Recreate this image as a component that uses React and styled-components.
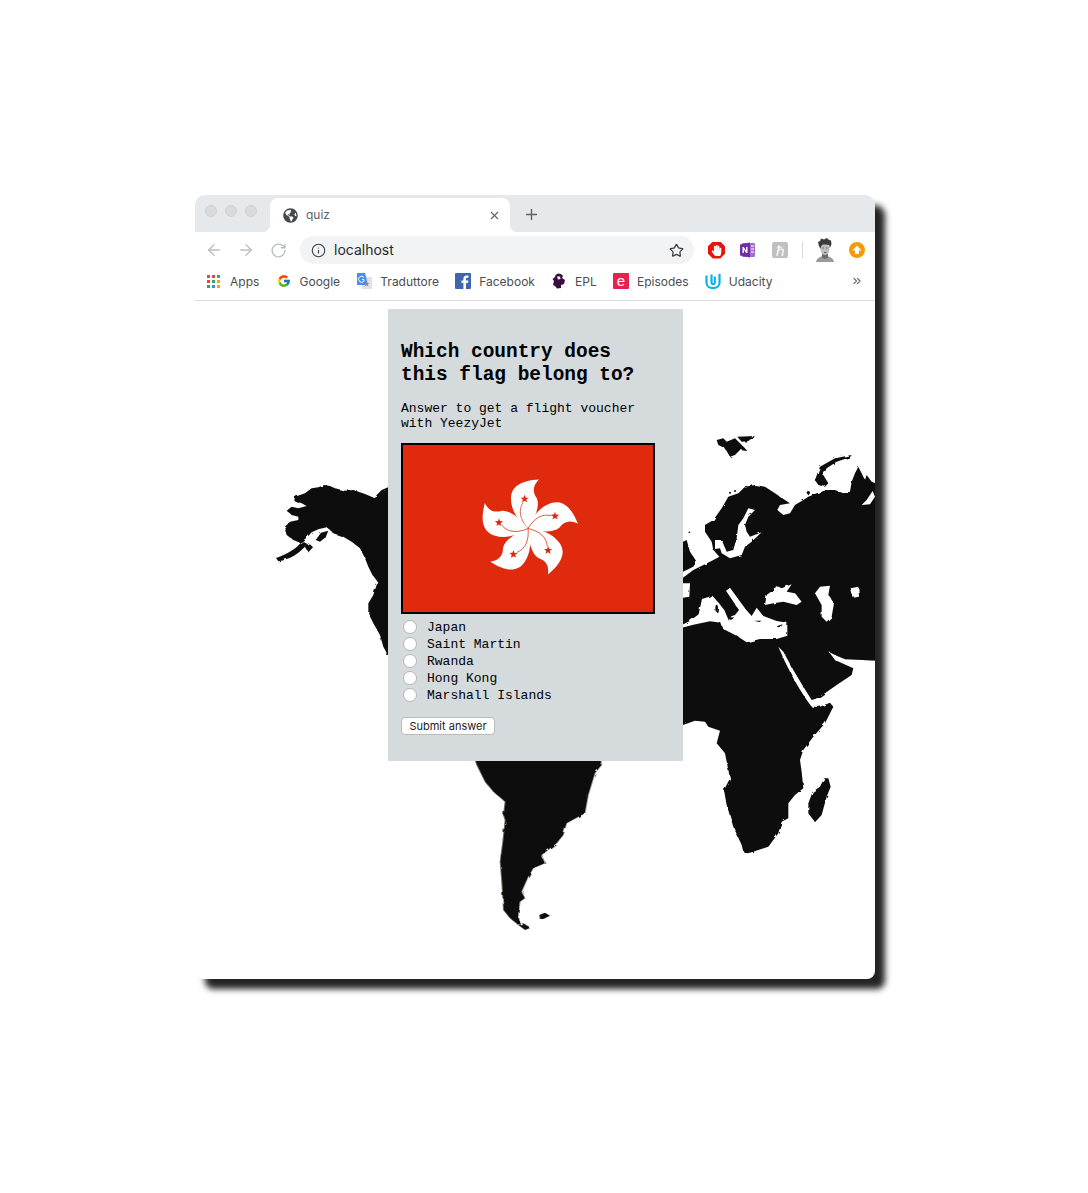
import React from 'react'
import styled, { createGlobalStyle } from 'styled-components'
import { ArrowLeft, ArrowRight, RotateCw, Info, Star, X, Plus, ChevronsRight } from 'lucide-react'
import { FaGlobeAmericas, FaHandPaper } from 'react-icons/fa'
import { FcGoogle } from 'react-icons/fc'

const GlobalStyle = createGlobalStyle`
  html, body {
    margin: 0;
    background: #fff;
  }
`

const Page = styled.div`
  height: 1193px;
  padding: 195px 0 0 195px;
  box-sizing: border-box;
  overflow: hidden;
`

const Window = styled.div`
  width: 680px;
  height: 784px;
  display: flex;
  flex-direction: column;
  background: #fff;
  border-radius: 10px 10px 8px 8px;
  box-shadow: 10px 10px 6px rgba(0, 0, 0, 0.86);
`

const TabStrip = styled.div`
  height: 37px;
  flex: none;
  display: flex;
  align-items: flex-end;
  background: #e6e9ec;
  border-radius: 10px 10px 0 0;
`

const Lights = styled.div`
  width: 75px;
  height: 100%;
  flex: none;
  display: flex;
  gap: 8px;
  padding: 10px 0 0 10px;
  box-sizing: border-box;
`

const Light = styled.span`
  width: 12px;
  height: 12px;
  box-sizing: border-box;
  border-radius: 50%;
  background: #d9dadb;
  border: 1px solid #d0d1d2;
`

const Tab = styled.div`
  position: relative;
  width: 240px;
  height: 34px;
  flex: none;
  display: flex;
  align-items: center;
  padding: 0 9px 0 13px;
  box-sizing: border-box;
  background: #fff;
  border-radius: 8px 8px 0 0;
  font: 12px Inter, sans-serif;
  color: #5f6368;

  &::before,
  &::after {
    content: '';
    position: absolute;
    bottom: 0;
    width: 8px;
    height: 8px;
  }
  &::before {
    left: -8px;
    background: radial-gradient(circle at 0 0, transparent 8px, #fff 8.5px);
  }
  &::after {
    right: -8px;
    background: radial-gradient(circle at 100% 0, transparent 8px, #fff 8.5px);
  }
`

const TabTitle = styled.span`
  flex: 1;
  margin-left: 8px;
  padding-bottom: 2px;
`

const NewTab = styled.div`
  margin: 0 0 9px 13px;
  display: flex;
  color: #5f6368;
`

const Toolbar = styled.div`
  height: 36px;
  flex: none;
  display: flex;
  align-items: center;
  padding: 0 9px;
  box-sizing: border-box;
`

const NavButton = styled.div`
  width: 20px;
  height: 20px;
  flex: none;
  margin-right: 12px;
  display: flex;
  align-items: center;
  justify-content: center;
  color: #bcbfc2;
`

const Omnibox = styled.div`
  width: 394px;
  height: 28px;
  flex: none;
  display: flex;
  align-items: center;
  padding: 0 10px 0 11px;
  box-sizing: border-box;
  border-radius: 14px;
  background: #f1f3f4;
  color: #3c4043;
  font: 14px Inter, sans-serif;
`

const Url = styled.span`
  flex: 1;
  margin-left: 8px;
  padding-bottom: 2px;
  color: #26282b;
`

const Extensions = styled.div`
  flex: 1;
  display: flex;
  align-items: center;
  padding-left: 14px;
`

const ExtSlot = styled.div`
  width: 16px;
  height: 16px;
  flex: none;
  margin-right: 16px;
  display: flex;
  align-items: center;
  justify-content: center;
`

const StopSign = styled(ExtSlot)`
  width: 17px;
  height: 17px;
  margin-right: 15px;
  background: #e6150c;
  color: #fff;
  clip-path: polygon(28% 0, 72% 0, 100% 28%, 100% 72%, 72% 100%, 28% 100%, 0 72%, 0 28%);
`

const GreyTile = styled(ExtSlot)`
  background: #c0c0c0;
  border-radius: 2px;
  color: #fff;
  font: 14px 'Liberation Serif', serif;
`

const Divider = styled.div`
  width: 1px;
  height: 16px;
  flex: none;
  margin-right: 12px;
  margin-left: -2px;
  background: #d8dadc;
`

const OrangeDot = styled(ExtSlot)`
  margin: 0;
  border-radius: 50%;
  background: #f29b0a;
`

const Avatar = styled.svg`
  width: 20px;
  height: 24px;
  flex: none;
  margin-right: 14px;
`

const Bookmarks = styled.div`
  height: 33px;
  flex: none;
  display: flex;
  align-items: center;
  gap: 16.2px;
  padding: 0 12px 6px 11px;
  box-sizing: border-box;
  border-bottom: 1px solid #d9dbdd;
  font: 12px Inter, sans-serif;
  color: #4a4d51;
`

const Bookmark = styled.div`
  display: flex;
  align-items: center;
  gap: 8px;
  white-space: nowrap;
`

const BookmarkIcon = styled.div`
  width: 16px;
  height: 16px;
  flex: none;
  display: flex;
  align-items: center;
  justify-content: center;
`

const EpisodesIcon = styled(BookmarkIcon)`
  background: #e8204f;
  border-radius: 1px;
  color: #fff;
  font: 15px/16px 'Liberation Sans', sans-serif;
`

const AppsGrid = styled.div`
  display: grid;
  grid-template-columns: repeat(3, 3px);
  grid-auto-rows: 3px;
  gap: 2px;
  margin-left: -2px;
`

const AppsDot = styled.i`
  background: ${(p) => p.$color};
`

const More = styled.div`
  margin-left: auto;
  display: flex;
  color: #6b6e72;
`

const Content = styled.main`
  position: relative;
  flex: 1;
  overflow: hidden;
  display: flex;
  flex-direction: column;
  align-items: center;
  border-radius: 0 0 8px 8px;
`

const WorldMap = styled.svg`
  position: absolute;
  inset: 0;
  width: 680px;
  height: 678px;
`

const Card = styled.section`
  position: relative;
  width: 295px;
  height: 452px;
  flex: none;
  margin: 8px 0 0 1px;
  padding: 32px 13px 0;
  box-sizing: border-box;
  background: #d5dadc;
  color: #000;
  font: 13px/15px 'Liberation Mono', monospace;
`

const Question = styled.h1`
  max-width: 250px;
  margin: 0 0 14px;
  font: bold 19.45px/23px 'Liberation Mono', monospace;
`

const Lead = styled.p`
  margin: 0 0 11.5px;
`

const FlagFrame = styled.svg`
  display: block;
  width: 254px;
  height: 171px;
  margin-bottom: 5.5px;
`

const Option = styled.label`
  height: 17px;
  display: flex;
  align-items: center;
  gap: 10px;
  padding-left: 2px;
`

const Radio = styled.input`
  appearance: none;
  width: 14px;
  height: 14px;
  flex: none;
  margin: 0;
  box-sizing: border-box;
  border-radius: 50%;
  background: #fff;
  border: 1px solid #b4b6b8;
  transform: translateY(-1px);
`

const Submit = styled.button`
  display: block;
  width: 94px;
  height: 18px;
  margin-top: 13px;
  padding: 0;
  box-sizing: border-box;
  background: #fff;
  border: 1px solid #b9bbbd;
  border-radius: 4px;
  color: #222;
  font: 11px Inter, sans-serif;
`

const apps = ['#e8453c', '#e8453c', '#4285f4', '#e8453c', '#34a853', '#f9a602', '#34a853', '#4285f4', '#f9a602']

// flag: one petal, turned five times round the middle
const Petal = ({ angle }) => (
  <g transform={`rotate(${angle})`}>
    <path d="M0 0C-10 -8 -17 -18 -17 -30C-17 -42 -7 -48 11 -49C5 -43 4 -37 9 -30C12 -22 7 -10 0 0Z" fill="#fff" />
    <path d="M0 0C-8 -9 -10 -18 -5 -26" fill="none" stroke="#df2a0e" strokeWidth="0.7" />
    <polygon
      transform="translate(-3.4 -29.5) scale(1.2)"
      points="0,-3.6 1,-1.1 3.4,-1.1 1.5,0.5 2.1,2.9 0,1.5 -2.1,2.9 -1.5,0.5 -3.4,-1.1 -1,-1.1"
      fill="#df2a0e"
    />
  </g>
)

const Flag = () => (
  <FlagFrame viewBox="0 0 254 171">
    <rect width="254" height="171" fill="#000" />
    <rect x="2" y="2" width="250" height="167" fill="#df2a0e" />
    <g transform="translate(127 85.5)">
      {[0, 72, 144, 216, 288].map((a) => (
        <Petal key={a} angle={a} />
      ))}
    </g>
  </FlagFrame>
)

// map shapes are traced in page pixels x3, one group per region
const MapArt = () => (
  <WorldMap viewBox="195 301 680 678">
    <defs>
      <filter id="coast" x="-5%" y="-5%" width="110%" height="110%">
        <feTurbulence type="fractalNoise" baseFrequency="0.18" numOctaves="1" seed="4" />
        <feDisplacementMap in="SourceGraphic" scale="3" />
        <feGaussianBlur stdDeviation="0.4" />
      </filter>
    </defs>
    <g fill="#100c08" filter="url(#coast)">
      <g transform="translate(265 470) scale(.3333)">
        <path d="M400 50L369 52L350 60L335 75L330 85L300 72L265 60L240 62L210 55L195 48L178 45L160 52L140 55L120 70L90 80L88 92L110 100L125 108L100 115L80 110L65 122L80 135L100 140L100 150L75 155L58 172L65 195L85 210L105 218L125 203L140 187L160 178L185 172L195 180L205 190L235 200L260 215L285 235L300 265L310 290L325 320L335 345L325 375L310 400L310 430L325 460L345 495L355 530L372 562L400 600Z" />
        <path d="M33 264C68 252 92 238 112 214L127 222C105 250 75 268 40 274Z" />
        <path d="M120 232L135 223L144 232L130 247Z" />
        <path d="M152 210L168 188L190 182L182 202L165 215Z" />
        <path d="M314 315L325 318L340 338L335 345L322 332Z" fill="#fff" />
        <circle cx="366" cy="552" r="3" />
      </g>
      <g transform="translate(680 425) scale(.3333)">
        <path d="M0 465L40 435L70 420L100 405L118 395L100 375L95 350L75 320L75 300L100 285L125 250L145 215L175 205L195 185L225 180L255 185L285 205L315 225L330 235L300 240L292 255L310 270L330 265L345 240L370 225L385 215L410 205L440 195L465 195L490 205L510 200L515 170L525 145L535 125L540 135L555 165L560 150L575 170L600 180L600 708L545 705L495 703L470 692L445 680L420 655L432 660L465 705L520 730L515 750L470 780L420 815L395 828L0 830Z" />
        <path d="M9 350L20 345L30 380L50 410L40 425L9 440Z" />
        <path d="M110 45L130 40L140 50L165 40L195 70L200 78L180 75L165 90L150 95L135 70L115 60Z" />
        <path d="M172 35L225 33L205 48L185 50Z" />
        <path d="M405 165L420 125L465 100L515 90L510 97L470 110L440 130L430 150L445 175L435 185L415 180Z" />
        <circle cx="150" cy="203" r="3" />
        <circle cx="165" cy="198" r="3" />
        <circle cx="195" cy="182" r="3" />
        <circle cx="385" cy="203" r="5" />
        <circle cx="28" cy="322" r="2.5" />
        <g fill="#fff">
          <path d="M205 250L225 255L205 275L195 300L200 320L210 335L245 322L215 350L195 365L185 390L150 400L125 385L120 370L105 372L105 345L125 345L140 380L160 375L170 340L175 300L190 280Z" />
          <path d="M9 475L30 475L28 515L9 518Z" />
          <path d="M0 602L30 588L56 568L66 522L97 512L113 530L133 555L147 588L150 575L165 570L177 555L138 497L150 488L197 553L215 573L230 548L250 573L290 588L322 593L322 632L290 642L240 642L200 652L170 632L130 612L123 593L90 589L40 599L0 610Z" />
          <path d="M255 540L260 510L280 495L285 480L305 490L335 478L320 500L345 505L365 530L350 540L310 530L280 535Z" />
          <path d="M405 505L420 485L450 482L445 510L462 535L455 575L440 590L425 575L425 540Z" />
          <path d="M512 490L535 485L537 515L520 518Z" />
          <path d="M578 198L560 225L545 240L570 238L585 215Z" />
          <path d="M295 665L310 680L340 735L370 785L395 825L440 812L455 830L460 842L430 852L395 845L375 820L340 760L315 710Z" />
        </g>
        <g>
          <ellipse cx="110" cy="550" rx="4" ry="11" />
          <path d="M143 575L165 578L152 585Z" />
          <path d="M222 587L245 587L238 591Z" />
          <path d="M290 604L308 598L300 609Z" />
        </g>
      </g>
      <g transform="translate(680 690) scale(.3333)">
        <path d="M0 107L9 105L45 92L75 95L85 110L120 122L110 160L135 190L145 240L150 265L132 300L140 345L160 410L185 465L190 485L210 488L235 480L265 470L295 430L305 395L325 385L325 340L345 315L370 295L365 245L360 210L370 180L400 140L435 100L460 50L450 38L420 50L395 50L380 30L360 0L0 0Z" />
        <path d="M385 340L398 305L420 290L433 265L445 265L452 290L440 320L425 375L405 397L385 370Z" />
      </g>
      <g transform="translate(460 755) scale(.3333)">
        <path d="M40 0L50 30L75 80L100 110L135 140L130 180L135 195L128 260L120 320L125 380L128 430L130 465L150 490L175 510L180 505L175 480L180 440L195 430L185 410L205 365L220 340L255 325L245 300L290 265L310 240L320 205L375 175L385 120L405 55L425 30L420 0Z" />
        <path d="M175 510L190 505L212 518L195 525Z" />
        <path d="M238 480L255 473L270 482L250 492L240 492Z" />
      </g>
    </g>
  </WorldMap>
)

const App = () => (
  <Page>
    <GlobalStyle />
    <Window>
      <TabStrip>
        <Lights>
          <Light />
          <Light />
          <Light />
        </Lights>
        <Tab>
          <FaGlobeAmericas size={15} color="#45484c" />
          <TabTitle>quiz</TabTitle>
          <X size={13} strokeWidth={2} />
        </Tab>
        <NewTab>
          <Plus size={17} strokeWidth={2} />
        </NewTab>
      </TabStrip>
      <Toolbar>
        <NavButton><ArrowLeft size={18} strokeWidth={1.8} /></NavButton>
        <NavButton><ArrowRight size={18} strokeWidth={1.8} /></NavButton>
        <NavButton><RotateCw size={17} strokeWidth={2} /></NavButton>
        <Omnibox>
          <Info size={15} strokeWidth={1.8} />
          <Url>localhost</Url>
          <Star size={15} strokeWidth={2} />
        </Omnibox>
        <Extensions>
          <StopSign><FaHandPaper size={11} /></StopSign>
          <ExtSlot>
            <svg width="16" height="16" viewBox="0 0 16 16">
              <rect x="2" y="1" width="13" height="14" rx="1" fill="#a56fd0" />
              <path d="M0 2.5L10 0.5V15.5L0 13.5Z" fill="#6f2da8" />
              <path d="M2.5 11V5H3.8L6 8.6V5H7.5V11H6.2L4 7.4V11Z" fill="#fff" />
              <path d="M11 4H14M11 7H14M11 10H14" stroke="#fff" strokeWidth="1" />
            </svg>
          </ExtSlot>
          <GreyTile>ℏ</GreyTile>
          <Divider />
          <Avatar viewBox="0 0 20 24">
            <path d="M1 24C2 19.5 5 19 8 18L12 18C15 19 18 19.5 19 24Z" fill="#9a9a9a" />
            <path d="M7 15H13V19.5L10 21L7 19.5Z" fill="#6a6a6a" />
            <ellipse cx="10" cy="11" rx="4.5" ry="6" fill="#bdbdbd" />
            <path d="M4 8L3 4L5 3L6 0.5L9 1.5L12 0L14 2L16 2.5L16.5 6L15 10L14 7C12 6 10 6.5 8 6.5C7 7 6 8 5.5 11Z" fill="#3a3a3a" />
            <path d="M7.5 10H9M11 10H12.5M9 14.5H11.5" stroke="#555" strokeWidth="0.9" />
          </Avatar>
          <OrangeDot>
            <svg width="16" height="16" viewBox="0 0 16 16">
              <path d="M8 3.5L12.5 8.5H10V12H6V8.5H3.5Z" fill="#fff" />
            </svg>
          </OrangeDot>
        </Extensions>
      </Toolbar>
      <Bookmarks>
        <Bookmark>
          <BookmarkIcon>
            <AppsGrid>
              {apps.map((c, i) => (
                <AppsDot key={i} $color={c} />
              ))}
            </AppsGrid>
          </BookmarkIcon>
          Apps
        </Bookmark>
        <Bookmark>
          <BookmarkIcon><FcGoogle size={14} /></BookmarkIcon>
          Google
        </Bookmark>
        <Bookmark>
          <BookmarkIcon>
            <svg width="16" height="16" viewBox="0 0 16 16">
              <rect x="6" y="4" width="10" height="12" rx="1" fill="#dfe1e3" />
              <path d="M1 0H9L12 12H1Z" fill="#4c8bf5" />
              <path d="M10.5 8L11.3 10L13.5 10L11.8 11.3L12.4 13.5L10.5 12.2L8.6 13.5L9.2 11.3Z" fill="#8a8d91" />
              <path d="M8 4.5A3 3 0 1 0 8 8V6.5H6" fill="none" stroke="#fff" strokeWidth="1" />
            </svg>
          </BookmarkIcon>
          Traduttore
        </Bookmark>
        <Bookmark>
          <BookmarkIcon>
            <svg width="16" height="16" viewBox="0 0 16 16">
              <rect width="16" height="16" rx="1" fill="#3f66ad" />
              <path d="M11 16V10H13L13.4 7.5H11V6C11 5.2 11.3 4.8 12.2 4.8H13.5V2.6C13 2.5 12.3 2.5 11.7 2.5C9.7 2.5 8.4 3.7 8.4 5.8V7.5H6.5V10H8.4V16Z" fill="#fff" />
            </svg>
          </BookmarkIcon>
          Facebook
        </Bookmark>
        <Bookmark>
          <BookmarkIcon>
            <svg width="14" height="16" viewBox="0 0 14 16">
              <path d="M6 0.5L9 1L11 3L10 5L13 7L12 11L9 12L9 15L5 15.5L3 13L1 12L2 8L0.5 6L3 4L3.5 2Z" fill="#3a0f3f" />
              <path d="M5 3.5L8 3.5L8.5 6L6 6.5Z" fill="#fff" />
            </svg>
          </BookmarkIcon>
          EPL
        </Bookmark>
        <Bookmark>
          <EpisodesIcon>e</EpisodesIcon>
          Episodes
        </Bookmark>
        <Bookmark>
          <BookmarkIcon>
            <svg width="16" height="16" viewBox="0 0 16 16" fill="none" stroke="#0eb3e4" strokeWidth="2.2">
              <path d="M1.5 2.5V10C1.5 12.8 4.2 15 8 15C11.8 15 14.5 12.8 14.5 10V1" />
              <path d="M6.5 1.5V9.5C6.5 11 8 11.5 9.2 10.8C9.6 10.6 9.8 10.2 9.8 9.5V3.5" />
            </svg>
          </BookmarkIcon>
          Udacity
        </Bookmark>
        <More><ChevronsRight size={12} strokeWidth={2.4} /></More>
      </Bookmarks>
      <Content>
        <MapArt />
        <Card>
          <Question>Which country does this flag belong to?</Question>
          <Lead>Answer to get a flight voucher with YeezyJet</Lead>
          <Flag />
          {['Japan', 'Saint Martin', 'Rwanda', 'Hong Kong', 'Marshall Islands'].map((name) => (
            <Option key={name}>
              <Radio type="radio" name="country" />
              {name}
            </Option>
          ))}
          <Submit type="button">Submit answer</Submit>
        </Card>
      </Content>
    </Window>
  </Page>
)

export default App
